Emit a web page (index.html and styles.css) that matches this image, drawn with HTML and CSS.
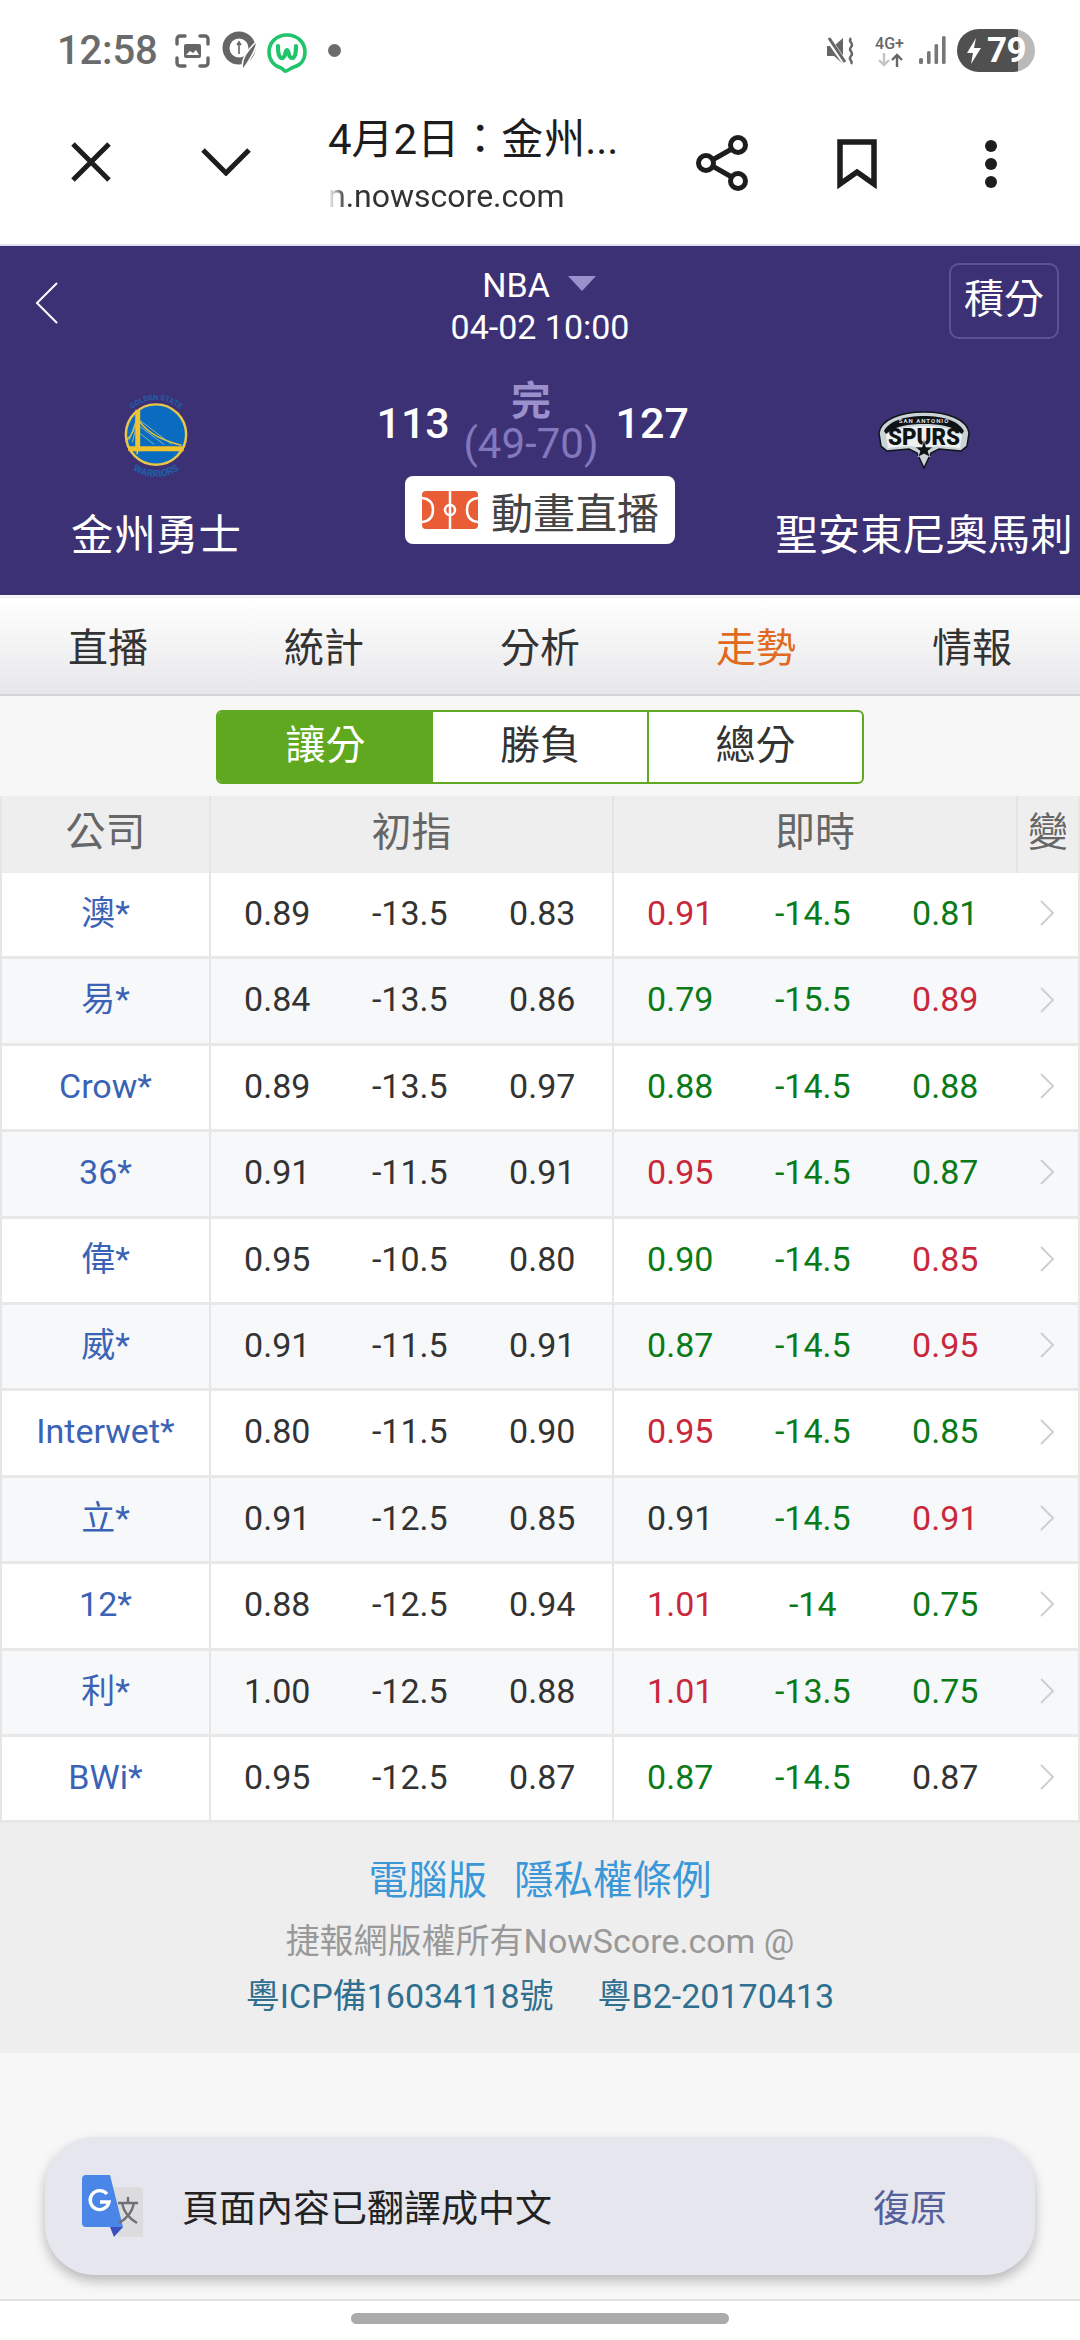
FILE: index.html
```html
<!DOCTYPE html>
<html lang="zh-Hant">
<head>
<meta charset="utf-8">
<title>NBA 走勢</title>
<link rel="stylesheet" href="styles.css">
</head>
<body>
<svg class="defs" width="0" height="0" aria-hidden="true"><symbol id="chev" viewBox="0 0 16 26"><path d="M2 1 L14 13 L2 25" fill="none" stroke="#cfcfcf" stroke-width="2"/></symbol></svg>
<div class="page">
  <div class="status">
    <div class="status-left">
      <span class="time">12:58</span>
      <svg class="st-shot" viewBox="0 0 35 34"><path d="M2 10V5a3 3 0 0 1 3-3h5M25 2h5a3 3 0 0 1 3 3v5M33 24v5a3 3 0 0 1-3 3h-5M10 32H5a3 3 0 0 1-3-3v-5" fill="none" stroke="#666" stroke-width="3.4" stroke-linecap="round"/><rect x="9" y="10" width="17" height="14" rx="2" fill="#666"/><path d="M11 21l4-4 3 2 3-3 3 5z" fill="#fff"/></svg>
      <svg class="st-clock" viewBox="0 0 36 40"><circle cx="17" cy="17" r="13" fill="none" stroke="#666" stroke-width="7"/><path d="M17 11v12M15 14l2-3 2 3" fill="none" stroke="#666" stroke-width="1.6"/><path d="M35 10C34 22 26 30 21 39c-2-6 0-16 14-29z" fill="#666" stroke="#fff" stroke-width="1.5"/></svg>
      <svg class="st-w" viewBox="0 0 40 40"><path d="M20 2C9 2 2 10 2 19c0 8 5 14 12 16 3 1 3 4 5 3 3-1 5-3 8-4 7-2 11-8 11-15C38 10 31 2 20 2z" fill="none" stroke="#1fc46b" stroke-width="3.6"/><path d="M11 13c0 8 1 12 4 12 4 0 3-8 5-8s1 8 5 8c3 0 4-4 4-12" fill="none" stroke="#1fc46b" stroke-width="4.2" stroke-linecap="round"/></svg>
      <span class="st-dot"></span>
    </div>
    <div class="status-right">
      <svg class="st-mute" viewBox="0 0 30 28"><path d="M0 9h7l9-8v26l-9-8H0z" fill="#666"/><path d="M0 0l18 26" stroke="#fff" stroke-width="5.500"/><path d="M2 1l16 24" stroke="#666" stroke-width="3"/><path d="M24 1c-4 4 4 5 0 9s4 5 0 9 3 5 0 8" fill="none" stroke="#666" stroke-width="2.4"/></svg>
      <div class="st-net"><span class="net-label">4G+</span>
        <svg class="net-arrows" viewBox="0 0 26 14"><path d="M7 0v12M2 7l5 5 5-5" fill="none" stroke="#c4c4c4" stroke-width="2.4"/><path d="M20 14V2M15 7l5-5 5 5" fill="none" stroke="#666" stroke-width="2.4"/></svg></div>
      <svg class="st-signal" viewBox="0 0 27 28"><g fill="#777"><rect x="0" y="22" width="4" height="6" rx="1.5"/><rect x="8" y="15" width="3.6" height="13" rx="1.5"/><rect x="15.500" y="8" width="3.6" height="20" rx="1.5"/><rect x="23" y="0" width="3.6" height="28" rx="1.5"/></g></svg>
      <div class="battery"><svg class="bolt" viewBox="0 0 16 26"><path d="M10 0L1 15h6l-2 11 10-16H8z" fill="#fff"/></svg><span class="batt-num">79</span></div>
    </div>
  </div>

  <div class="toolbar">
    <svg class="tb-x" viewBox="0 0 40 40"><path d="M2 2l36 36M38 2L2 38" stroke="#1d1d20" stroke-width="5" fill="none"/></svg>
    <svg class="tb-down" viewBox="0 0 50 28"><path d="M2 2l23 23L48 2" stroke="#1d1d20" stroke-width="5" fill="none"/></svg>
    <div class="tb-title">
      <div class="tb-name">4月2日：金州...</div>
      <div class="tb-url">n.nowscore.com</div>
    </div>
    <svg class="tb-share" viewBox="0 0 52 56"><path d="M41 11L11 28l30 17" fill="none" stroke="#1d1d20" stroke-width="5"/><circle cx="42" cy="10" r="7.500" fill="#fff" stroke="#1d1d20" stroke-width="5"/><circle cx="10" cy="28" r="7.500" fill="#fff" stroke="#1d1d20" stroke-width="5"/><circle cx="42" cy="46" r="7.500" fill="#fff" stroke="#1d1d20" stroke-width="5"/></svg>
    <svg class="tb-mark" viewBox="0 0 40 50"><path d="M3 3h34v42L20 33 3 45z" fill="none" stroke="#1d1d20" stroke-width="5.500"/></svg>
    <div class="tb-dots"><span></span><span></span><span></span></div>
  </div>
  <div class="tb-line"></div>

  <header class="match">
    <div class="match-top">
      <svg class="back" viewBox="0 0 24 42"><path d="M22 1L2 21l20 20" fill="none" stroke="#fff" stroke-width="2"/></svg>
      <div class="league">
        <div class="league-name">NBA<span class="tri"></span></div>
        <div class="league-date">04-02 10:00</div>
      </div>
      <div class="rank-btn">積分</div>
    </div>
    <div class="match-main">
      <div class="team">
        <svg class="logo" viewBox="0 0 72 86">
          <defs>
            <path id="arcTop" d="M0 43A36 36 0 0 1 72 43"/>
            <path id="arcBot" d="M-6 43A42 42 0 0 0 78 43"/>
          </defs>
          <text class="gs-text"><textPath href="#arcTop" startOffset="50%" text-anchor="middle">GOLDEN STATE</textPath></text>
          <text class="gs-text gs-big"><textPath href="#arcBot" startOffset="50%" text-anchor="middle">WARRIORS</textPath></text>
          <circle cx="36" cy="42" r="30.500" fill="#0a6cc0" stroke="#e8c64a" stroke-width="2.500"/>
          <path d="M17 24v38M6 48c5-4 9-12 11-24 5 12 18 22 45 29" fill="none" stroke="#f0c230" stroke-width="1.500"/>
          <path d="M15 17h5v42h-5z" fill="#f0c230"/>
          <path d="M8 54h56v5H8z" fill="#f0c230"/>
          <path d="M20 28l32 24M20 34l24 18M20 41l14 11M15 30l-6 18M15 38l-3 12" stroke="#8fb8a8" stroke-width="1" fill="none"/>
        </svg>
        <div class="team-name">金州勇士</div>
      </div>
      <div class="center">
        <div class="score-row">
          <span class="score">113</span>
          <div class="state">
            <div class="state-done">完</div>
            <div class="state-half">(49-70)</div>
          </div>
          <span class="score">127</span>
        </div>
        <div class="anim-btn">
          <svg class="court" viewBox="0 0 56 38"><rect width="56" height="38" rx="4" fill="#e85c36"/><path d="M28 0v38" stroke="#fff" stroke-width="2.500"/><circle cx="28" cy="19" r="5" fill="none" stroke="#fff" stroke-width="2.500"/><path d="M0 7c9 1 11 7 11 12S9 30 0 31M56 7c-9 1-11 7-11 12s2 11 11 12" fill="none" stroke="#fff" stroke-width="2.500"/></svg>
          <span>動畫直播</span>
        </div>
      </div>
      <div class="team">
        <svg class="logo" viewBox="0 0 94 85">
          <path d="M2 40C4 26 24 19 47 19s43 7 45 21l-2 13-6 5-22-2-8 4-7 15-7-15-8-4-22 2-6-5z" fill="#c9d2d6" stroke="#0e1416" stroke-width="1.500"/>
          <path d="M7 38C12 28 28 23 47 23s35 5 40 15l-2 3C76 33 62 31 47 31s-29 2-38 10z" fill="#0e1416"/>
          <path d="M9 42C18 35 32 33 47 33s29 2 38 9l-2 13-21-2-15 2-15-2-21 2z" fill="#eef1f2"/>
          <text class="sp-small" x="47" y="30" text-anchor="middle">SAN ANTONIO</text>
          <text class="sp-text" x="47" y="52" text-anchor="middle" textLength="72" lengthAdjust="spacingAndGlyphs">SPURS</text>
          <path d="M47 46l2 8 7 0-5 4 2 6-6-3-6 3 2-6-5-4 7 0z" fill="#0e1416" stroke="#eef1f2" stroke-width=".6"/>
        </svg>
        <div class="team-name">聖安東尼奧馬刺</div>
      </div>
    </div>
  </header>

  <nav class="tabs">
    <span>直播</span><span>統計</span><span>分析</span><span class="tab-on">走勢</span><span>情報</span>
  </nav>

  <div class="seg">
    <span class="seg-on">讓分</span><span>勝負</span><span>總分</span>
  </div>

  <div class="table">
    <div class="thead">
      <span>公司</span><span>初指</span><span>即時</span><span>變</span>
    </div>
    <div class="row"><span class="co">澳*</span><div class="vals"><span>0.89</span><span>-13.5</span><span>0.83</span></div><div class="vals"><span class="r">0.91</span><span class="g">-14.5</span><span class="g">0.81</span></div><svg class="arrow"><use href="#chev"/></svg></div>
    <div class="row"><span class="co">易*</span><div class="vals"><span>0.84</span><span>-13.5</span><span>0.86</span></div><div class="vals"><span class="g">0.79</span><span class="g">-15.5</span><span class="r">0.89</span></div><svg class="arrow"><use href="#chev"/></svg></div>
    <div class="row"><span class="co">Crow*</span><div class="vals"><span>0.89</span><span>-13.5</span><span>0.97</span></div><div class="vals"><span class="g">0.88</span><span class="g">-14.5</span><span class="g">0.88</span></div><svg class="arrow"><use href="#chev"/></svg></div>
    <div class="row"><span class="co">36*</span><div class="vals"><span>0.91</span><span>-11.5</span><span>0.91</span></div><div class="vals"><span class="r">0.95</span><span class="g">-14.5</span><span class="g">0.87</span></div><svg class="arrow"><use href="#chev"/></svg></div>
    <div class="row"><span class="co">偉*</span><div class="vals"><span>0.95</span><span>-10.5</span><span>0.80</span></div><div class="vals"><span class="g">0.90</span><span class="g">-14.5</span><span class="r">0.85</span></div><svg class="arrow"><use href="#chev"/></svg></div>
    <div class="row"><span class="co">威*</span><div class="vals"><span>0.91</span><span>-11.5</span><span>0.91</span></div><div class="vals"><span class="g">0.87</span><span class="g">-14.5</span><span class="r">0.95</span></div><svg class="arrow"><use href="#chev"/></svg></div>
    <div class="row"><span class="co">Interwet*</span><div class="vals"><span>0.80</span><span>-11.5</span><span>0.90</span></div><div class="vals"><span class="r">0.95</span><span class="g">-14.5</span><span class="g">0.85</span></div><svg class="arrow"><use href="#chev"/></svg></div>
    <div class="row"><span class="co">立*</span><div class="vals"><span>0.91</span><span>-12.5</span><span>0.85</span></div><div class="vals"><span>0.91</span><span class="g">-14.5</span><span class="r">0.91</span></div><svg class="arrow"><use href="#chev"/></svg></div>
    <div class="row"><span class="co">12*</span><div class="vals"><span>0.88</span><span>-12.5</span><span>0.94</span></div><div class="vals"><span class="r">1.01</span><span class="g">-14</span><span class="g">0.75</span></div><svg class="arrow"><use href="#chev"/></svg></div>
    <div class="row"><span class="co">利*</span><div class="vals"><span>1.00</span><span>-12.5</span><span>0.88</span></div><div class="vals"><span class="r">1.01</span><span class="g">-13.5</span><span class="g">0.75</span></div><svg class="arrow"><use href="#chev"/></svg></div>
    <div class="row"><span class="co">BWi*</span><div class="vals"><span>0.95</span><span>-12.5</span><span>0.87</span></div><div class="vals"><span class="g">0.87</span><span class="g">-14.5</span><span>0.87</span></div><svg class="arrow"><use href="#chev"/></svg></div>
  </div>

  <footer class="foot">
    <div class="foot-links"><span>電腦版</span><span>隱私權條例</span></div>
    <div class="foot-copy">捷報網版權所有NowScore.com @</div>
    <div class="foot-icp"><span>粵ICP備16034118號</span><span>粵B2-20170413</span></div>
  </footer>

  <div class="spacer"></div>
  <div class="navbar"><span class="pill"></span></div>

  <div class="toast">
    <svg class="gt" viewBox="0 0 62 63"><path d="M30 12h27a4 4 0 0 1 4 4v46H36z" fill="#dcdcde"/><path d="M4 0h24l13 52H4a4 4 0 0 1-4-4V4a4 4 0 0 1 4-4z" fill="#4a86e8"/><path d="M28 52h13l-9 10z" fill="#3a4fbf"/><path d="M36 28h20M46 22v6M52 28c-2 10-8 16-15 20M40 28c2 10 8 16 15 20" fill="none" stroke="#707074" stroke-width="2.400"/><path d="M25 19a9.500 9.500 0 1 0 2 8h-9" fill="none" stroke="#fff" stroke-width="3.400"/></svg>
    <span class="toast-text">頁面內容已翻譯成中文</span>
    <span class="toast-act">復原</span>
  </div>
</div>
</body>
</html>
```
FILE: styles.css
```css
* { box-sizing: border-box; }
html, body { margin: 0; padding: 0; }
body { font-family: Roboto, "Noto Sans CJK TC", sans-serif; background: #f7f7f7; color: #333; }
.defs { display: block; width: 0; height: 0; }
.page { position: relative; width: 1080px; height: 2340px; display: flex; flex-direction: column; overflow: hidden; }

.status { flex: none; height: 80px; background: #fff; display: flex; justify-content: space-between; padding: 29px 45px 0 57px; }
.status-left { display: flex; align-items: flex-start; }
.time { font-size: 40px; font-weight: 500; line-height: 44px; color: #6b6b6b; width: 118px; letter-spacing: -.2px; white-space: nowrap; }
.st-shot { width: 35px; height: 34px; margin-top: 5px; margin-right: 12px; }
.st-clock { width: 36px; height: 40px; margin-top: 2px; margin-right: 9px; }
.st-w { width: 40px; height: 40px; margin-top: 4px; margin-right: 21px; }
.st-dot { width: 13px; height: 13px; border-radius: 50%; background: #6b6b6b; margin-top: 15px; }
.status-right { display: flex; align-items: flex-start; }
.st-mute { width: 30px; height: 28px; margin-top: 8px; margin-right: 16px; }
.st-net { width: 33px; margin-top: 7px; margin-right: 13px; display: flex; flex-direction: column; align-items: center; }
.net-label { font-size: 16px; font-weight: 500; line-height: 16px; color: #666; white-space: nowrap; }
.net-arrows { width: 26px; height: 14px; margin-top: 1px; }
.st-signal { width: 27px; height: 28px; margin-top: 7px; margin-right: 11px; }
.battery { width: 78px; height: 43px; border-radius: 22px; background: linear-gradient(90deg, #505050 0, #505050 61px, #b9b9b9 61px); display: flex; align-items: center; padding-left: 9px; }
.bolt { width: 16px; height: 26px; margin-right: 5px; flex: none; }
.batt-num { font-size: 35px; font-weight: 700; color: #fff; line-height: 43px; letter-spacing: -.5px; }

.toolbar { flex: none; height: 164px; background: #fff; display: flex; align-items: center; }
.tb-x { width: 40px; height: 40px; margin-left: 71px; }
.tb-down { width: 50px; height: 28px; margin-left: 90px; }
.tb-title { width: 340px; margin-left: 77px; padding-top: 8px; }
.tb-name { font-size: 42px; line-height: 52px; color: #1d1d20; white-space: nowrap; }
.tb-url { font-size: 32px; line-height: 44px; margin-top: 8px; color: #333; -webkit-mask-image: linear-gradient(90deg, transparent 0, #000 18px); mask-image: linear-gradient(90deg, transparent 0, #000 18px); }
.tb-share { width: 52px; height: 56px; margin-left: 28px; margin-top: 2px; }
.tb-mark { width: 40px; height: 50px; margin-left: 89px; margin-top: 3px; }
.tb-dots { width: 12px; margin-left: 108px; margin-top: 4px; display: flex; flex-direction: column; gap: 6px; }
.tb-dots span { display: block; width: 12px; height: 12px; border-radius: 50%; background: #1d1d20; }
.tb-line { flex: none; height: 2px; background: #dfe3f0; }

.match { flex: none; height: 349px; background: #3d3175; color: #fff; padding-top: 17px; }
.match-top { height: 76px; display: grid; grid-template-columns: 312px 1fr 312px; align-items: start; }
.back { width: 24px; height: 42px; margin: 19px 0 0 35px; }
.league { text-align: center; }
.league-name { font-size: 34px; line-height: 44px; margin-left: -2px; }
.tri { display: inline-block; width: 0; height: 0; margin-left: 18px; vertical-align: 6px; border-left: 14px solid transparent; border-right: 14px solid transparent; border-top: 15px solid #9a90cc; }
.league-date { font-size: 34px; line-height: 40px; }
.rank-btn { justify-self: end; margin-right: 21px; width: 110px; height: 76px; border: 2px solid #5d5295; border-radius: 10px; font-size: 40px; line-height: 70px; text-align: center; }
.match-main { display: grid; grid-template-columns: 312px 1fr 312px; }
.team { display: flex; flex-direction: column; align-items: center; padding-top: 54px; }
.logo { display: block; height: 85px; width: 100px; overflow: visible; }
.team-name { font-size: 42.500px; line-height: 50px; margin-top: 33px; white-space: nowrap; }
.gs-text { font: 700 7.500px Roboto, sans-serif; fill: #1f5fa8; }
.gs-big { font-size: 10px; }
.sp-text { font: 900 23px Roboto, sans-serif; fill: #0e1416; }
.sp-small { font: 700 6px Roboto, sans-serif; fill: #d8dfe2; letter-spacing: 1px; }
.center { display: flex; flex-direction: column; align-items: center; padding-top: 42px; }
.score-row { display: flex; align-items: center; gap: 17px; margin-left: -18px; }
.score { font-size: 43px; font-weight: 500; line-height: 50px; width: 70px; text-align: center; }
.state { display: flex; flex-direction: column; align-items: center; }
.state-done { font-size: 40px; font-weight: 700; line-height: 42px; color: #9a90cc; }
.state-half { font-size: 42px; line-height: 42px; color: #8378bd; white-space: nowrap; }
.anim-btn { width: 270px; height: 68px; margin-top: 11px; background: #fff; border-radius: 8px; display: flex; align-items: center; padding-left: 17px; gap: 13px; font-size: 42px; color: #444; white-space: nowrap; }
.court { width: 56px; height: 38px; flex: none; }

.tabs { flex: none; height: 99px; margin-top: 2px; padding-bottom: 3px; background: linear-gradient(#fff, #e7e7ea); border-top: 1px solid #f0eff6; border-bottom: 2px solid #d4d4d4; display: grid; grid-template-columns: repeat(5, 216px); align-items: center; text-align: center; font-size: 40px; color: #333; }
.tab-on { color: #e06a20; }

.seg { flex: none; width: 648px; height: 74px; margin: 14px 0 12px 216px; border: 2px solid #5fa81f; border-radius: 6px; display: grid; grid-template-columns: 215px 214px 1fr; overflow: hidden; background: #fff; font-size: 40px; line-height: 68px; text-align: center; color: #333; }
.seg span + span { border-left: 2px solid #5fa81f; }
.seg .seg-on { background: #5fa81f; color: #fff; }
.seg .seg-on + span { border-left: 0; }

.table { flex: none; border-left: 2px solid #e6e6e6; border-right: 2px solid #e6e6e6; }
.thead { height: 77px; background: #eee; display: grid; grid-template-columns: 207px 403px 404px 62px; align-items: stretch; font-size: 40px; line-height: 74px; color: #666; text-align: center; }
.thead span + span { border-left: 2px solid #e4e4e4; }
.row { height: 86.4px; display: grid; grid-template-columns: 207px 403px 404px 62px; align-items: stretch; background: #fff; border-bottom: 3px solid #e8e8e8; font-size: 34px; line-height: 80px; text-align: center; }
.row:nth-child(odd) { background: #f6f8fa; }
.co { color: #3b63b5; white-space: nowrap; }
.vals { display: grid; grid-template-columns: repeat(3, 132.5px); border-left: 2px solid #e6e6e6; color: #333; }
.arrow { width: 62px; height: 26px; align-self: center; margin-top: -3px; justify-self: center; }
.r { color: #c9283c; }
.g { color: #0b7a18; }

.foot { flex: none; height: 230px; background: #eee; padding-top: 35px; text-align: center; }
.foot-links { display: flex; justify-content: center; gap: 27px; font-size: 39.500px; line-height: 46px; color: #3a98d8; }
.foot-copy { font-size: 34px; line-height: 44px; margin-top: 15px; color: #999; }
.foot-icp { display: flex; justify-content: center; gap: 44px; font-size: 34px; line-height: 44px; margin-top: 11px; color: #2f6f8f; }

.spacer { flex: 1; }
.navbar { flex: none; height: 41px; background: #fff; border-top: 2px solid #e2e2e2; display: flex; justify-content: center; padding-top: 12px; }
.pill { width: 378px; height: 11px; border-radius: 6px; background: #ababab; }

.toast { position: absolute; left: 45px; top: 2137px; width: 990px; height: 138px; border-radius: 50px; background: #e6e6ef; box-shadow: 0 6px 12px rgba(0,0,0,.25); display: flex; align-items: center; padding: 0 88px 0 37px; }
.gt { width: 62px; height: 63px; flex: none; }
.toast-text { font-size: 37px; margin-left: 38px; color: #222; white-space: nowrap; }
.toast-act { font-size: 37px; margin-left: auto; color: #55609a; }
```
